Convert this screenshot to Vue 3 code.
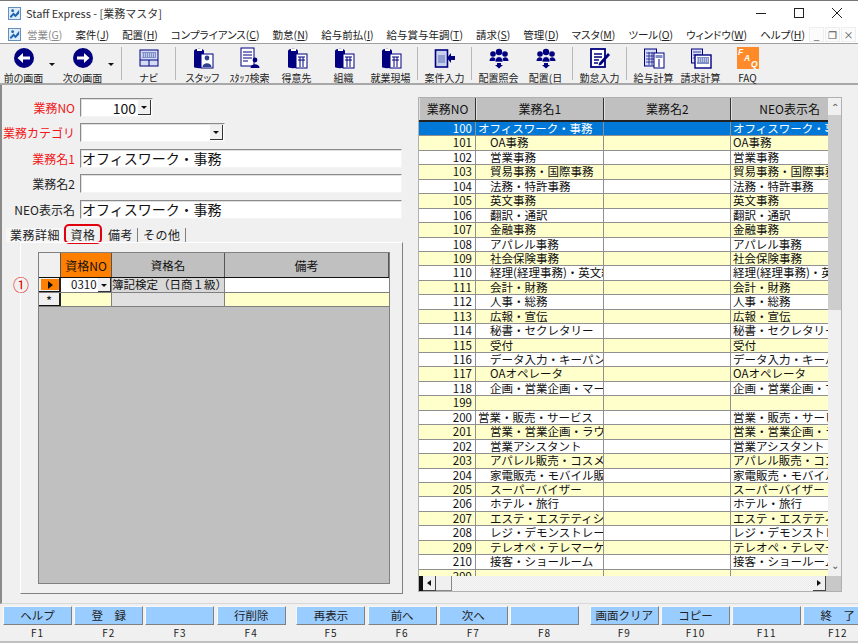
<template>
  <div class="window">
    <div class="titlebar">
      <svg class="app-icon" viewBox="0 0 14 14"><rect x="0.5" y="0.5" width="13" height="13" fill="#dcecf8" stroke="#5a86b8" /><path d="M2 10 L6 6 L8 8 L12 3 L12 7 L8 11 L6 9 L3 12 Z" fill="#1c63b0" /><circle cx="5" cy="4" r="1.5" fill="#1c63b0" /></svg>
      <span class="title-text">Staff Express - [業務マスタ]</span>
      <div class="win-controls">
        <svg viewBox="0 0 10 10"><path d="M0 5.5H10" stroke="#222" /></svg>
        <svg viewBox="0 0 10 10"><rect x="0.5" y="0.5" width="9" height="9" fill="none" stroke="#222" /></svg>
        <svg viewBox="0 0 10 10"><path d="M0 0L10 10M10 0L0 10" stroke="#222" /></svg>
      </div>
    </div>

    <div class="menubar">
      <svg class="app-icon" viewBox="0 0 14 14"><rect x="0.5" y="0.5" width="13" height="13" fill="#dcecf8" stroke="#5a86b8" /><path d="M2 10 L6 6 L8 8 L12 3 L12 7 L8 11 L6 9 L3 12 Z" fill="#1c63b0" /><circle cx="5" cy="4" r="1.5" fill="#1c63b0" /></svg>
      <span v-for="m in menus" :key="m.label" class="menu-item" :class="{ disabled: m.disabled }">{{ m.label }}(<u>{{ m.key }}</u>)</span>
      <div class="mdi-buttons">
        <span class="mdi-btn">_</span>
        <span class="mdi-btn">❐</span>
        <span class="mdi-btn">×</span>
      </div>
    </div>

    <div class="toolbar">
      <template v-for="(t, i) in tools" :key="i">
        <span v-if="t.sep" class="tool-sep"></span>
        <span v-else-if="t.drop" class="tool-drop"></span>
        <div v-else class="tool">
          <svg class="tool-icon" viewBox="0 0 22 22">
            <template v-if="t.icon === 'back'">
              <circle cx="11" cy="11" r="10" fill="#000080" />
              <path d="M17 9.5H10V6L4.5 11L10 16V12.5H17Z" fill="#fff" />
            </template>
            <template v-else-if="t.icon === 'next'">
              <circle cx="11" cy="11" r="10" fill="#000080" />
              <path d="M5 9.5H12V6L17.5 11L12 16V12.5H5Z" fill="#fff" />
            </template>
            <template v-else-if="t.icon === 'navi'">
              <rect x="2" y="3" width="18" height="16" fill="#d4dcf4" stroke="#000080" />
              <rect x="4" y="5" width="14" height="6" fill="#7f8fc8" />
              <path d="M4 7H18M4 9H18" stroke="#fff" stroke-dasharray="1 1" />
              <path d="M2 13H20M11 13V19" stroke="#000080" />
            </template>
            <template v-else-if="t.icon === 'staff'">
              <path d="M2 4C2 1 12 1 12 4V20C12 21.5 2 21.5 2 20Z" fill="#000080" />
              <rect x="5" y="2" width="5" height="2" fill="#fff" />
              <rect x="9" y="7" width="12" height="14" fill="#fff" stroke="#000080" />
              <circle cx="15" cy="11" r="2.4" fill="#304090" />
              <path d="M10.5 20C10.5 15 19.5 15 19.5 20Z" fill="#304090" />
            </template>
            <template v-else-if="t.icon === 'search'">
              <rect x="2" y="1" width="13" height="18" fill="#fff" stroke="#000080" />
              <path d="M4 5H13M4 8H13M4 11H13M4 14H9" stroke="#000080" />
              <circle cx="16" cy="13" r="2.4" fill="#000080" />
              <path d="M11.5 21C11.5 16 20.5 16 20.5 21Z" fill="#000080" />
            </template>
            <template v-else-if="t.icon === 'book'">
              <path d="M2 4C2 1 12 1 12 4V20C12 21.5 2 21.5 2 20Z" fill="#000080" />
              <rect x="5" y="2" width="5" height="2" fill="#fff" />
              <rect x="10" y="7" width="11" height="14" fill="#fff" stroke="#000080" />
              <path d="M12 10H19M12 13H19M14 10V20M17 10V20" stroke="#000080" />
            </template>
            <template v-else-if="t.icon === 'case'">
              <rect x="1.5" y="3" width="12" height="17" fill="#c8d0ec" stroke="#000080" stroke-width="1.6" />
              <path d="M4 9H11M4 11H11M4 13H11M4 15H11" stroke="#5a6ab0" />
              <path d="M21 9H17V6L13 11L17 16V13H21Z" fill="#000080" />
            </template>
            <template v-else-if="t.icon === 'people'">
              <circle cx="11" cy="5" r="3.2" fill="#000080" />
              <circle cx="5" cy="7" r="2.8" fill="#000080" />
              <circle cx="17" cy="7" r="2.8" fill="#000080" />
              <path d="M1.5 14C1.5 9 8 9 8 14Z" fill="#000080" />
              <path d="M14 14C14 9 20.5 9 20.5 14Z" fill="#000080" />
              <path d="M7 15C7 8 15 8 15 15Z" fill="#000080" stroke="#fff" stroke-width="0.6" />
              <path d="M9 16H13V18H15L11 21.5L7 18H9Z" fill="#000080" />
            </template>
            <template v-else-if="t.icon === 'pencil'">
              <rect x="2" y="2" width="14" height="18" fill="#fff" stroke="#000080" stroke-width="1.8" />
              <path d="M5 7H13M5 10H13M5 13H10M5 16H9" stroke="#000080" stroke-width="1.4" />
              <path d="M10 16L19 6L21 8L12 18L9.5 18.5Z" fill="#000080" />
            </template>
            <template v-else-if="t.icon === 'calc'">
              <rect x="1.5" y="2" width="12" height="17" fill="#d4dcf4" stroke="#000080" />
              <path d="M3 6H12M3 9H12M3 12H12M3 15H12M6 5V18M9 5V18" stroke="#000080" stroke-width="0.7" />
              <rect x="11" y="6" width="10" height="15" fill="#fff" stroke="#000080" />
              <rect x="12.5" y="8" width="7" height="3" fill="#7f8fc8" />
              <path d="M16 12V20" stroke="#000080" />
            </template>
            <template v-else-if="t.icon === 'bill'">
              <rect x="1.5" y="2" width="11" height="14" fill="#d4dcf4" stroke="#000080" />
              <path d="M3 5H11M3 8H11M3 11H11" stroke="#000080" stroke-width="0.7" />
              <rect x="5" y="8" width="16" height="13" fill="#fff" stroke="#000080" stroke-width="1.4" />
              <rect x="7" y="10" width="12" height="7" fill="#7f8fc8" />
              <path d="M7 12H19M7 14H19" stroke="#fff" stroke-dasharray="1 1" />
            </template>
            <template v-else-if="t.icon === 'faq'">
              <rect width="22" height="22" fill="#ff8a2a" />
              <text x="1" y="8" class="faq-letter">F</text>
              <text x="7" y="14" class="faq-letter">A</text>
              <text x="14" y="20" class="faq-letter">Q</text>
            </template>
          </svg>
          <span class="tool-label" :class="t.cls">{{ t.label }}</span>
        </div>
      </template>
    </div>

    <div class="client">
      <div class="left-pane">
        <div class="form-row">
          <label class="req">業務NO</label>
          <div class="field combo-no">
            <span class="no-value">100</span>
            <span class="combo-btn"></span>
          </div>
        </div>
        <div class="form-row">
          <label class="req">業務カテゴリ</label>
          <div class="field combo-cat"><span class="combo-btn"></span></div>
        </div>
        <div class="form-row">
          <label class="req">業務名1</label>
          <div class="field wide">オフィスワーク・事務</div>
        </div>
        <div class="form-row">
          <label>業務名2</label>
          <div class="field wide"></div>
        </div>
        <div class="form-row">
          <label>NEO表示名</label>
          <div class="field wide">オフィスワーク・事務</div>
        </div>

        <div class="tabs">
          <span v-for="tab in tabs" :key="tab" class="tab" :class="{ active: tab === '資格' }">{{ tab }}</span>
        </div>
        <div class="tab-panel">
          <span class="callout">①</span>
          <div class="sub-grid">
            <div class="sub-head">
              <div class="sg-sel"></div>
              <div class="sg-no head-orange">資格NO</div>
              <div class="sg-name">資格名</div>
              <div class="sg-note">備考</div>
            </div>
            <div class="sub-row">
              <div class="sg-sel"><span class="row-marker"></span></div>
              <div class="sg-no cell-white">0310<span class="combo-btn small"></span></div>
              <div class="sg-name cell-gray">簿記検定（日商１級）</div>
              <div class="sg-note cell-white"></div>
            </div>
            <div class="sub-row new-row">
              <div class="sg-sel star">*</div>
              <div class="sg-no cell-yellow"></div>
              <div class="sg-name cell-lightgray"></div>
              <div class="sg-note cell-yellow"></div>
            </div>
          </div>
        </div>
      </div>

      <div class="right-pane">
        <div class="list-body">
          <div class="list-view">
            <div class="list-head">
              <div class="c1">業務NO</div>
              <div class="c2">業務名1</div>
              <div class="c3">業務名2</div>
              <div class="c4">NEO表示名</div>
            </div>
            <div class="list-rows">
              <div
                v-for="(r, i) in rows"
                :key="r.no"
                class="list-row"
                :class="{ selected: i === 0, yellow: i % 2 === 1 }"
              >
                <div class="c1">{{ r.no }}</div>
                <div class="c2" :class="{ indent: r.indent }">{{ r.name }}</div>
                <div class="c3"></div>
                <div class="c4">{{ r.name }}</div>
              </div>
            </div>
          </div>
          <div class="vscroll">
            <span class="vs-arrow">⌃</span>
            <span class="vs-thumb"></span>
            <span class="vs-arrow down">⌄</span>
          </div>
        </div>
        <div class="hscroll">
          <span class="hs-black"></span>
          <span class="hs-btn"><i class="tri-left"></i></span>
          <span class="hs-thumb"></span>
          <span class="hs-fill"></span>
          <span class="hs-btn"><i class="tri-right"></i></span>
          <span class="hs-corner"></span>
        </div>
      </div>
    </div>

    <div class="fkeys">
      <div v-for="k in fkeys" :key="k.f" class="fkey" :class="{ gap: k.gap }">
        <button class="fkey-btn">{{ k.label }}</button>
        <span class="fkey-name">{{ k.f }}</span>
      </div>
    </div>
  </div>
</template>

<script setup>
const menus = [
  { label: '営業', key: 'G', disabled: true },
  { label: '案件', key: 'J' },
  { label: '配置', key: 'H' },
  { label: 'コンプライアンス', key: 'C' },
  { label: '勤怠', key: 'N' },
  { label: '給与前払', key: 'I' },
  { label: '給与賞与年調', key: 'T' },
  { label: '請求', key: 'S' },
  { label: '管理', key: 'D' },
  { label: 'マスタ', key: 'M' },
  { label: 'ツール', key: 'O' },
  { label: 'ウィンドウ', key: 'W' },
  { label: 'ヘルプ', key: 'H' },
]

const tools = [
  { icon: 'back', label: '前の画面' },
  { drop: true },
  { icon: 'next', label: '次の画面' },
  { drop: true },
  { sep: true },
  { icon: 'navi', label: 'ナビ' },
  { sep: true },
  { icon: 'staff', label: 'スタッフ' },
  { icon: 'search', label: 'ｽﾀｯﾌ検索' },
  { icon: 'book', label: '得意先' },
  { icon: 'book', label: '組織' },
  { icon: 'book', label: '就業現場' },
  { sep: true },
  { icon: 'case', label: '案件入力' },
  { sep: true },
  { icon: 'people', label: '配置照会' },
  { icon: 'people', label: '配置(日' },
  { sep: true },
  { icon: 'pencil', label: '勤怠入力' },
  { sep: true },
  { icon: 'calc', label: '給与計算' },
  { icon: 'bill', label: '請求計算' },
  { icon: 'faq', label: 'FAQ' },
]

const tabs = ['業務詳細', '資格', '備考', 'その他']

const rows = [
  [100, 'オフィスワーク・事務', false],
  [101, 'OA事務'],
  [102, '営業事務'],
  [103, '貿易事務・国際事務'],
  [104, '法務・特許事務'],
  [105, '英文事務'],
  [106, '翻訳・通訳'],
  [107, '金融事務'],
  [108, 'アパレル事務'],
  [109, '社会保険事務'],
  [110, '経理(経理事務)・英文経理'],
  [111, '会計・財務'],
  [112, '人事・総務'],
  [113, '広報・宣伝'],
  [114, '秘書・セクレタリー'],
  [115, '受付'],
  [116, 'データ入力・キーパンチ'],
  [117, 'OAオペレータ'],
  [118, '企画・営業企画・マーケティング'],
  [199, ''],
  [200, '営業・販売・サービス', false],
  [201, '営業・営業企画・ラウンダー'],
  [202, '営業アシスタント'],
  [203, 'アパレル販売・コスメ'],
  [204, '家電販売・モバイル販売'],
  [205, 'スーパーバイザー'],
  [206, 'ホテル・旅行'],
  [207, 'エステ・エステティシャン'],
  [208, 'レジ・デモンストレーター'],
  [209, 'テレオペ・テレマーケティング'],
  [210, '接客・ショールーム'],
  [299, ''],
].map(([no, name, indent = true]) => ({ no, name, indent }))

const fkeys = [
  { f: 'F1', label: 'ヘルプ' },
  { f: 'F2', label: '登　録' },
  { f: 'F3', label: '' },
  { f: 'F4', label: '行削除' },
  { f: 'F5', label: '再表示', gap: true },
  { f: 'F6', label: '前へ' },
  { f: 'F7', label: '次へ' },
  { f: 'F8', label: '' },
  { f: 'F9', label: '画面クリア', gap: true },
  { f: 'F10', label: 'コピー' },
  { f: 'F11', label: '' },
  { f: 'F12', label: '終　了' },
]
</script>

<style>
html, body {
  margin: 0;
  background: #f0f0f0;
}
</style>

<style scoped>
.window {
  width: 858px;
  height: 643px;
  display: flex;
  flex-direction: column;
  overflow: hidden;
  background: #f0f0f0;
  color: #111;
  font-family: "Noto Sans CJK JP", "Noto Sans", sans-serif;
  font-size: 12px;
  box-sizing: border-box;
}

.titlebar {
  height: 25px;
  flex: none;
  box-sizing: border-box;
  border-top: 1px solid #777;
  background: #fff;
  display: flex;
  align-items: center;
  padding-left: 8px;
}
.app-icon {
  width: 13px;
  height: 13px;
  flex: none;
}
.title-text {
  margin-left: 5px;
  font-size: 11px;
  color: #333;
}
.win-controls {
  margin-left: auto;
  display: flex;
  gap: 28px;
  padding-right: 16px;
}
.win-controls svg {
  width: 10px;
  height: 10px;
}

.menubar {
  height: 18px;
  flex: none;
  background: #fff;
  display: flex;
  align-items: center;
  padding-left: 8px;
  gap: 13px;
  border-bottom: 1px solid #a0a0a0;
  font-size: 10.5px;
  font-feature-settings: "palt";
  color: #222;
}
.menubar .app-icon {
  margin-right: -7px;
}
.menu-item.disabled {
  color: #8a8a8a;
}
.mdi-buttons {
  position: absolute;
  top: 27px;
  left: 809px;
  display: flex;
  gap: 1px;
}
.mdi-btn {
  width: 15px;
  height: 15px;
  background: #fbfbfb;
  color: #555;
  font-size: 10px;
  line-height: 14px;
  text-align: center;
  border: 1px solid #eee;
  box-sizing: border-box;
}

.toolbar {
  height: 41px;
  flex: none;
  box-sizing: border-box;
  display: flex;
  align-items: stretch;
  padding: 2px 0 2px 0;
  border-bottom: 2px solid #a8a8a8;
  background: #f0f0f0;
}
.tool {
  width: 47px;
  flex: none;
  display: flex;
  flex-direction: column;
  align-items: center;
}
.tool-icon {
  width: 22px;
  height: 22px;
  flex: none;
  margin-top: 1px;
}
.tool-label {
  font-size: 10px;
  line-height: 13px;
  margin-top: 2px;
  white-space: nowrap;
  color: #222;
  font-feature-settings: "palt";
}
.faq-letter {
  font-family: "Liberation Sans", sans-serif;
  font-style: italic;
  font-weight: bold;
  font-size: 8.5px;
  fill: #fff;
}
.tool-sep {
  width: 1px;
  flex: none;
  background: #b8b8b8;
  margin: 1px 3px 1px 3px;
}
.tool-drop {
  width: 12px;
  flex: none;
  position: relative;
}
.tool-drop::after {
  content: "";
  position: absolute;
  left: 2px;
  top: 17px;
  border: 3px solid transparent;
  border-top: 3px solid #111;
  border-bottom: 0;
}

.client {
  flex: 1;
  min-height: 0;
  display: flex;
  border-left: 2px solid #8a8a8a;
  border-bottom: 1px solid #d8d8d8;
}

.left-pane {
  width: 416px;
  flex: none;
  box-sizing: border-box;
  padding-top: 13px;
  display: flex;
  flex-direction: column;
}
.form-row {
  height: 19px;
  margin-bottom: 6.4px;
  display: flex;
  align-items: center;
}
.form-row label {
  width: 73px;
  margin-right: 5px;
  text-align: right;
  font-size: 12px;
  color: #222;
  white-space: nowrap;
  flex: none;
}
.form-row label.req {
  color: #f01818;
}
.field {
  height: 19px;
  box-sizing: border-box;
  background: #fff;
  border: 1px solid;
  border-color: #8a8a8a #f4f4f4 #f4f4f4 #8a8a8a;
  box-shadow: inset 1px 1px 0 #e0e0e0;
  display: flex;
  align-items: center;
  font-size: 14px;
  padding-left: 1px;
  position: relative;
}
.wide {
  width: 322px;
}
.combo-no {
  width: 73px;
  justify-content: flex-end;
}
.no-value {
  margin-right: 16px;
}
.combo-cat {
  width: 145px;
}
.combo-btn {
  position: absolute;
  right: 1px;
  top: 1px;
  bottom: 1px;
  width: 13px;
  background: #f0f0f0;
  border-right: 1px solid #333;
  border-bottom: 1px solid #333;
  box-sizing: border-box;
}
.combo-btn::after {
  content: "";
  position: absolute;
  left: 3px;
  top: 6px;
  border: 3px solid transparent;
  border-top: 3px solid #111;
  border-bottom: 0;
}

.tabs {
  display: flex;
  height: 16px;
  margin-top: 1.5px;
  padding-left: 4px;
  align-items: flex-end;
  font-size: 12px;
}
.tab {
  padding: 0 4px 1px 4px;
  margin-right: 1px;
  line-height: 13px;
  border-right: 1px solid #808080;
  color: #222;
  letter-spacing: 0.5px;
}
.tab:first-child {
  padding: 0 3px 1px 4px;
  border-right: none;
  background: #f6f6f6;
  width: 50px;
}
.tab.active {
  outline: 2.5px solid #e0000f;
  outline-offset: 0;
  border-radius: 3px;
  border-right: none;
  width: 30px;
  padding: 2px 2px 1px 2px;
  margin: 0 4px 0 2px;
  text-decoration: none;
  text-align: center;
}

.tab-panel {
  width: 383px;
  height: 352px;
  margin-left: 18px;
  box-sizing: border-box;
  padding: 9px 12px 9px 17px;
  border: 1px solid;
  border-color: #fff #808080 #808080 #fff;
  position: relative;
}
.callout {
  position: absolute;
  left: -8px;
  top: 31px;
  color: #e00000;
  font-size: 16px;
  line-height: 20px;
  font-family: "Noto Sans CJK JP", sans-serif;
}
.sub-grid {
  height: 100%;
  background: #c0c0c0;
  border: 1px solid #808080;
  box-sizing: border-box;
}
.sub-head, .sub-row {
  display: flex;
}
.sub-head {
  height: 24px;
  border-bottom: 1px solid #111;
}
.sub-row {
  height: 14.5px;
  box-sizing: border-box;
  border-bottom: 1px solid #808080;
  line-height: 13px;
}
.sub-row.new-row {
  border-bottom: 1px solid #808080;
}
.sub-head > div {
  display: flex;
  align-items: center;
  justify-content: center;
  box-sizing: border-box;
  border-right: 1px solid #555;
}
.sub-head .sg-sel {
  background: #f0f0f0;
}
.sg-sel {
  width: 22px;
  flex: none;
  box-sizing: border-box;
  background: #f0f0f0;
  border-right: 2px solid #222;
  position: relative;
}
.sub-row .sg-sel {
  border-bottom: 1px solid #111;
}
.sg-no {
  width: 51px;
  flex: none;
  box-sizing: border-box;
  border-right: 1px solid #808080;
  position: relative;
}
.sg-name {
  width: 113px;
  flex: none;
  box-sizing: border-box;
  border-right: 1px solid #808080;
  white-space: nowrap;
  overflow: hidden;
  font-size: 11.5px;
}
.sg-note {
  flex: 1;
}
.head-orange {
  background: #ff8000;
}
.cell-white {
  background: #fff;
}
.cell-gray {
  background: #d8d8d8;
}
.cell-lightgray {
  background: #e0e0e0;
}
.cell-yellow {
  background: #ffffcc;
}
.sub-row .sg-no.cell-white {
  padding-left: 10px;
  font-size: 11.5px;
}
.combo-btn.small {
  right: 0;
  top: 0;
  bottom: 0;
}
.row-marker {
  position: absolute;
  left: 2px;
  top: 1px;
  width: 18px;
  height: 11px;
  background: #ff8000;
}
.row-marker::after {
  content: "";
  position: absolute;
  left: 7px;
  top: 1.5px;
  border: 4px solid transparent;
  border-left: 5px solid #111;
  border-right: 0;
}
.star {
  text-align: center;
  font-size: 13px;
  line-height: 16px;
}

.right-pane {
  width: 424px;
  flex: none;
  margin-top: 12px;
  height: 495px;
  box-sizing: border-box;
  border: 1px solid #b0b0b0;
  display: flex;
  flex-direction: column;
}
.list-body {
  flex: 1;
  min-height: 0;
  display: flex;
}
.list-view {
  width: 409px;
  flex: none;
  overflow: hidden;
}
.list-head, .list-row {
  display: flex;
}
.c1 { width: 57px; }
.c2, .c3 { width: 127.5px; }
.c4 { width: 97px; }
.list-head > div, .list-row > div {
  flex: none;
  box-sizing: border-box;
  white-space: nowrap;
  overflow: hidden;
}
.list-head {
  height: 24px;
  background: #c0c0c0;
  border-bottom: 2px solid #222;
  box-sizing: border-box;
  font-size: 12px;
}
.list-head > div {
  border-right: 1px solid #333;
  border-left: 1px solid #e0e0e0;
  text-align: center;
  line-height: 22px;
}
.list-head > .c4 {
  border-right: none;
  text-align: right;
  padding-right: 8px;
}
.list-rows {
  height: 455px;
  overflow: hidden;
}
.list-row {
  height: 14.45px;
  box-sizing: border-box;
  background: #fff;
  border-bottom: 1px solid #909090;
  line-height: 13px;
  font-size: 11.5px;
}
.list-row.yellow {
  background: #ffffcc;
}
.list-row.selected {
  background: #0078d7;
  color: #fff;
}
.list-row > .c1 {
  text-align: right;
  padding-right: 3px;
  border-right: 1px solid #909090;
}
.list-row > .c2 {
  border-right: 1px solid #909090;
  padding-left: 2px;
}
.list-row > .c2.indent {
  padding-left: 14px;
}
.list-row > .c3 {
  border-right: 1px solid #909090;
}
.list-row > .c4 {
  padding-left: 2px;
}

.vscroll {
  flex: 1;
  background: #f0f0f0;
  display: flex;
  flex-direction: column;
  align-items: center;
}
.vs-arrow {
  height: 15px;
  line-height: 18px;
  font-size: 10px;
  color: #555;
  flex: none;
}
.vs-arrow.down {
  line-height: 8px;
  margin-top: auto;
}
.vs-thumb {
  width: 100%;
  height: 195px;
  margin-top: 2px;
  background: #cdcdcd;
}

.hscroll {
  height: 15px;
  flex: none;
  display: flex;
  background: #f0f0f0;
}
.hs-black {
  width: 4px;
  background: #111;
}
.hs-btn {
  width: 13px;
  flex: none;
  box-sizing: border-box;
  background: #f0f0f0;
  border-right: 1px solid #444;
  border-bottom: 1px solid #444;
  display: flex;
  align-items: center;
  justify-content: center;
}
.tri-left, .tri-right {
  display: block;
  border: 3px solid transparent;
}
.tri-left {
  border-right: 4px solid #111;
  border-left: 0;
}
.tri-right {
  border-left: 4px solid #111;
  border-right: 0;
}
.hs-thumb {
  width: 16px;
  flex: none;
  border-right: 1px solid #888;
  border-bottom: 1px solid #888;
  box-sizing: border-box;
}
.hs-fill {
  flex: 1;
  background: repeating-conic-gradient(#f8f8f8 0 25%, #eaeaea 0 50%) 0 0 / 2px 2px;
}
.hs-corner {
  width: 15px;
  flex: none;
  background: #c8c8c8;
}

.fkeys {
  height: 39px;
  flex: none;
  box-sizing: border-box;
  display: flex;
  padding: 2px 0 0 2px;
  border-bottom: 2px solid #c0c0c0;
}
.fkey {
  width: 71.2px;
  flex: none;
  display: flex;
  flex-direction: column;
  align-items: center;
}
.fkey.gap {
  margin-left: 8.6px;
}
.fkey-btn {
  width: 69px;
  height: 19px;
  padding: 0;
  box-sizing: border-box;
  background: #99ccff;
  border: 1px solid;
  border-color: #f8f8f8 #808080 #808080 #f8f8f8;
  font-family: inherit;
  font-size: 11.5px;
  line-height: 15px;
  color: #222;
}
.fkey-name {
  font-size: 10px;
  line-height: 13px;
  margin-top: 1px;
  letter-spacing: 1px;
  color: #222;
}
</style>
